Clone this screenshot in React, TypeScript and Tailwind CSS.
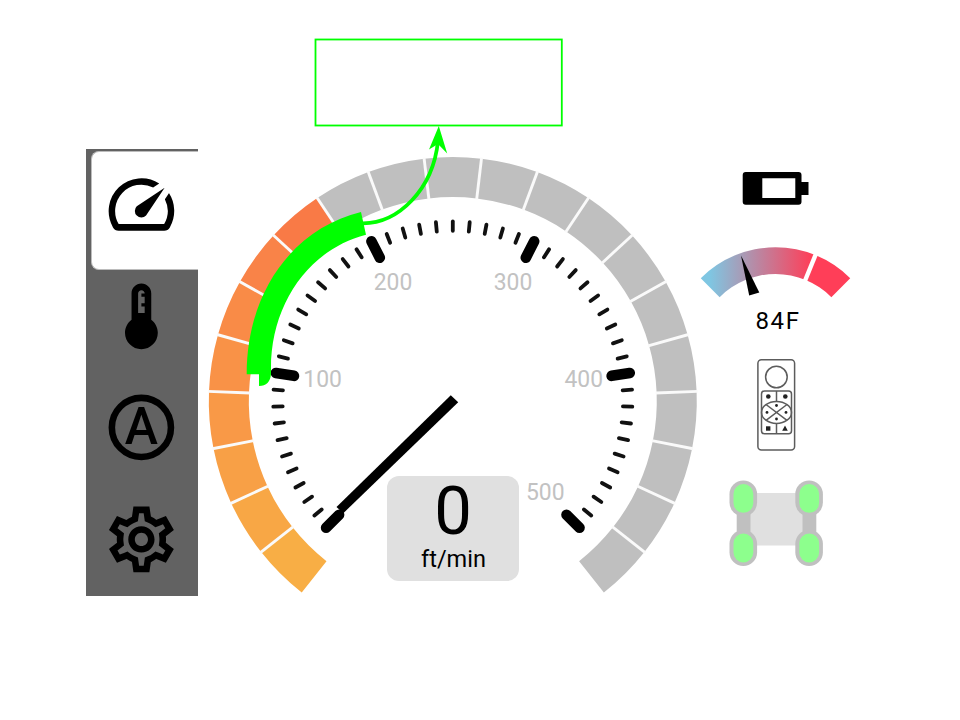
import React from "react";

const CX = 255.8;
const CY = 252;

// Point on the dial, angle in degrees clockwise from 12 o'clock.
function polar(cx: number, cy: number, r: number, deg: number): [number, number] {
  const a = (deg * Math.PI) / 180;
  return [cx + r * Math.sin(a), cy - r * Math.cos(a)];
}

function band(cx: number, cy: number, ro: number, ri: number, a0: number, a1: number) {
  const p = [polar(cx, cy, ro, a0), polar(cx, cy, ro, a1), polar(cx, cy, ri, a1), polar(cx, cy, ri, a0)].map(
    ([x, y]) => `${x.toFixed(2)} ${y.toFixed(2)}`
  );
  return `M${p[0]}A${ro} ${ro} 0 0 1 ${p[1]}L${p[2]}A${ri} ${ri} 0 0 0 ${p[3]}Z`;
}

const STEP = 13.5;
const START = -141.75;
const WARM = ["#f8ae45", "#f8a745", "#f8a046", "#f99947", "#f99247", "#f98b47", "#f98348", "#f97a46"];

const LABELS = [
  { text: "100", x: 125.6, y: 238 },
  { text: "200", x: 196, y: 141 },
  { text: "300", x: 316, y: 141 },
  { text: "400", x: 386.8, y: 238 },
  { text: "500", x: 348.3, y: 351 },
];

function Dial() {
  return (
    <svg width="511" height="447" viewBox="0 0 511 447" className="block">
      {Array.from({ length: 21 }, (_, i) => (
        <path
          key={i}
          d={band(CX, CY, 244, 204, START + i * STEP, START + (i + 1) * STEP)}
          fill={WARM[i] ?? "#bfbfbf"}
        />
      ))}
      {Array.from({ length: 20 }, (_, i) => {
        const a = START + (i + 1) * STEP;
        const [x1, y1] = polar(CX, CY, 203, a);
        const [x2, y2] = polar(CX, CY, 245, a);
        return <line key={i} x1={x1} y1={y1} x2={x2} y2={y2} stroke="#fafafa" strokeWidth="2.9" />;
      })}
      {Array.from({ length: 51 }, (_, i) => {
        const a = -135 + i * 5.4;
        const major = i % 10 === 0;
        const [x1, y1] = polar(CX, CY, major ? 160.8 : 170.2, a);
        const [x2, y2] = polar(CX, CY, major ? 179.2 : 179.6, a);
        return (
          <line
            key={i}
            x1={x1}
            y1={y1}
            x2={x2}
            y2={y2}
            stroke={major ? "#000" : "#111"}
            strokeWidth={major ? 10.6 : 3.8}
            strokeLinecap="round"
          />
        );
      })}
      <path d="M253.8 246.2L261.2 253.2L146.3 364.2L139.5 358Z" />
      {LABELS.map((l) => (
        <text key={l.text} x={l.x} y={l.y} fontSize="24" textAnchor="middle" fill="#c2c2c2" textLength="38.6" lengthAdjust="spacingAndGlyphs">
          {l.text}
        </text>
      ))}
    </svg>
  );
}

function NavIcon({ children }: { children: React.ReactNode }) {
  return (
    <svg width="78.8" height="78.8" viewBox="0 0 24 24" fillRule="evenodd" className="block">
      {children}
    </svg>
  );
}

function Sidebar() {
  return (
    <nav className="flex h-[446.5px] w-[111.5px] flex-col bg-[#626262] pl-[5.4px] pt-[2px]">
      <div className="h-[119px] w-[107px] shrink-0 rounded-l-lg border border-r-0 border-[#bcbcbc] bg-white pl-[10.1px] pt-[13.2px]">
        <NavIcon>
          <path d="M20.38 8.57l-1.23 1.85a8 8 0 0 1-.22 7.58H5.07A8 8 0 0 1 15.58 6.85l1.85-1.23A10 10 0 0 0 3.35 19a2 2 0 0 0 1.72 1h13.85a2 2 0 0 0 1.74-1 10 10 0 0 0-.27-10.44zm-9.79 6.84a2 2 0 0 0 2.83 0l5.66-8.49-8.49 5.66a2 2 0 0 0 0 2.83z" />
        </NavIcon>
      </div>
      <div className="flex flex-col gap-[32.7px] pl-[11.1px] pt-[7px]">
        <NavIcon>
          <path d="M15 13V5c0-1.66-1.34-3-3-3S9 3.34 9 5v8c-1.21.91-2 2.37-2 4 0 2.76 2.24 5 5 5s5-2.24 5-5c0-1.63-.79-3.09-2-4zm-4-8c0-.55.45-1 1-1s1 .45 1 1h-1v1h1v2h-1v1h1v2h-2V5z" />
        </NavIcon>
        <NavIcon>
          <circle cx="12" cy="12" r="9" fill="none" stroke="#000" strokeWidth="2" />
          <text x="12" y="17.1" fontSize="15.7" fontWeight="500" textAnchor="middle" textLength="10.1" lengthAdjust="spacingAndGlyphs">
            A
          </text>
        </NavIcon>
        <NavIcon>
          <path d="M19.44 12.99l-.01.02c.04-.33.08-.67.08-1.01 0-.34-.03-.66-.07-.99l.01.02 2.44-1.92-2.43-4.22-2.87 1.16.01.01c-.52-.4-1.09-.74-1.71-1h.01L14.44 2H9.57l-.44 3.07h.01c-.62.26-1.19.6-1.71 1l.01-.01-2.88-1.17-2.44 4.22 2.44 1.92.01-.02c-.04.33-.07.65-.07.99 0 .34.03.68.08 1.01l-.01-.02-2.1 1.65-.33.26 2.43 4.2 2.88-1.15-.02-.04c.53.41 1.1.75 1.73 1.01h-.03L9.58 22h4.85l.44-3.07h-.01c.62-.26 1.2-.6 1.73-1.01l-.02.04 2.88 1.15 2.43-4.2-2.44-1.92zM17.45 11.27c.04.31.05.52.05.73 0 .21-.02.43-.05.73l-.14 1.13.89.7 1.08.84-.7 1.21-1.27-.51-1.04-.42-.9.68c-.43.32-.84.56-1.25.73l-1.06.43-.16 1.13-.2 1.35h-1.4l-.19-1.35-.16-1.13-1.06-.43c-.43-.18-.83-.41-1.23-.71l-.91-.7-1.06.43-1.27.51-.7-1.21 1.08-.84.89-.7-.14-1.13c-.03-.31-.05-.54-.05-.74s.02-.43.05-.73l.14-1.13-.89-.7-1.08-.84.7-1.21 1.27.51 1.04.42.9-.68c.43-.32.84-.56 1.25-.73l1.06-.43.16-1.13.2-1.35h1.39l.19 1.35.16 1.13 1.06.43c.43.18.83.41 1.23.71l.91.7 1.06-.43 1.27-.51.7 1.21-1.07.85-.89.7.14 1.13zM12 8c-2.21 0-4 1.79-4 4s1.79 4 4 4 4-1.79 4-4-1.79-4-4-4zm0 6c-1.1 0-2-.9-2-2s.9-2 2-2 2 .9 2 2-.9 2-2 2z" />
        </NavIcon>
      </div>
    </nav>
  );
}

function Battery() {
  return (
    <svg width="68" height="34" viewBox="742 171 68 34" fillRule="evenodd" className="block">
      <path d="M745.7 172H798.5Q801.5 172 801.5 175V182H808.5V195H801.5V201.7Q801.5 204.7 798.5 204.7H745.7Q742.7 204.7 742.7 201.7V175Q742.7 172 745.7 172ZM762.3 178.3V198H795.3V178.3Z" />
    </svg>
  );
}

function TemperatureArc() {
  const [gx1, gy1] = polar(775.5, 353, 77, 22.2);
  const [gx2, gy2] = polar(775.5, 353, 108, 22.2);
  return (
    <svg width="152" height="52" viewBox="700 246 152 52" className="block">
      <defs>
        <linearGradient id="heat" gradientUnits="userSpaceOnUse" x1="710" y1="0" x2="812" y2="0">
          <stop offset="0" stopColor="#7fc6e2" />
          <stop offset="1" stopColor="#ff3e58" />
        </linearGradient>
      </defs>
      <path d={band(775.5, 353, 105.7, 79, -45, 45)} fill="url(#heat)" />
      <line x1={gx1} y1={gy1} x2={gx2} y2={gy2} stroke="#fff" strokeWidth="4.4" />
      <path d="M741 255.5L759.3 292.5L749.2 295.5Z" />
    </svg>
  );
}

function Remote() {
  return (
    <svg width="40" height="93" viewBox="756 358 40 93" fill="none" stroke="#5c5c5c" strokeWidth="1.5" className="block">
      <rect x="757.9" y="359.7" width="36.7" height="90.3" rx="3.5" />
      <circle cx="776.4" cy="377" r="10.8" />
      <rect x="761.5" y="391" width="30" height="42.7" rx="3" />
      <ellipse cx="776.5" cy="412.4" rx="15" ry="11" />
      <path d="M776.5 391V401.4M776.5 423.4V433.7M766 404.5L787 420.3M787 404.5L766 420.3" />
      <g fill="#222" stroke="none">
        <circle cx="768.3" cy="396.5" r="2.3" />
        <circle cx="785.3" cy="396.5" r="2.3" />
        <rect x="766" y="426.3" width="4.4" height="4.4" />
        <path d="M785 425.5L787.8 430.7H782.2Z" />
        <circle cx="776.5" cy="405.5" r="1.4" />
        <circle cx="776.5" cy="419" r="1.4" />
        <circle cx="767" cy="412.4" r="1.4" />
        <circle cx="786" cy="412.4" r="1.4" />
      </g>
    </svg>
  );
}

function Wheels() {
  return (
    <svg width="96" height="88" viewBox="728 479 96 88" className="block">
      <rect x="749" y="493" width="55" height="52.5" fill="#e0e0e0" />
      {[729.5, 795.3].map((x) => (
        <g key={x}>
          <rect x={x + 7.2} y="500" width="13.8" height="45" fill="#c0c0c0" />
          {[480.4, 530].map((y) => (
            <g key={y}>
              <rect x={x} y={y} width="27.6" height="36" rx="13.8" fill="#c0c0c0" />
              <rect x={x + 4} y={y + 3.6} width="19.8" height="28.8" rx="9.9" fill="#8dff8d" />
            </g>
          ))}
        </g>
      ))}
    </svg>
  );
}

function StatusColumn() {
  return (
    <aside className="flex w-[160px] flex-col items-center pt-[22px]">
      <Battery />
      <div className="h-[41px]" />
      <TemperatureArc />
      <div className="h-[60px] pl-[4px] pt-[9px] text-2xl leading-7 tracking-[1.6px]">84F</div>
      <Remote />
      <div className="h-[28px]" />
      <Wheels />
    </aside>
  );
}

export default function App() {
  return (
    <main className="relative h-[720px] w-[960px] overflow-hidden bg-white pl-[86px] pt-[149px] font-['Roboto',sans-serif] text-black">
      <div className="flex">
        <Sidebar />
        <section className="relative -ml-[0.5px] w-[499px] shrink-0">
          <Dial />
          <div className="absolute left-[190px] top-[327.4px] flex h-[105px] w-[132px] flex-col items-center rounded-xl bg-[#e0e0e0]">
            <div className="mt-[1px] h-[68px] text-[67px] leading-[69px]">0</div>
            <div className="pl-[1px] text-[23.5px] leading-7">ft/min</div>
          </div>
        </section>
        <StatusColumn />
      </div>
      <svg width="960" height="720" viewBox="0 0 960 720" className="pointer-events-none absolute left-0 top-0" fill="#00ff00">
        <rect x="315.5" y="39.5" width="246.3" height="86" fill="none" stroke="#00ff00" strokeWidth="1.8" />
        <path d="M246.7 374.3C246.7 290 295 228 361 212L366 234.7C307 250 271 306 271 368V374Q270 386 259 386V374.3Z" />
        <path d="M363 223.3C398 223.3 433 190 438 141" fill="none" stroke="#00ff00" strokeWidth="3.7" />
        <path d="M438.8 126L447.2 153.5L438 144L429 149.5Z" />
      </svg>
    </main>
  );
}
